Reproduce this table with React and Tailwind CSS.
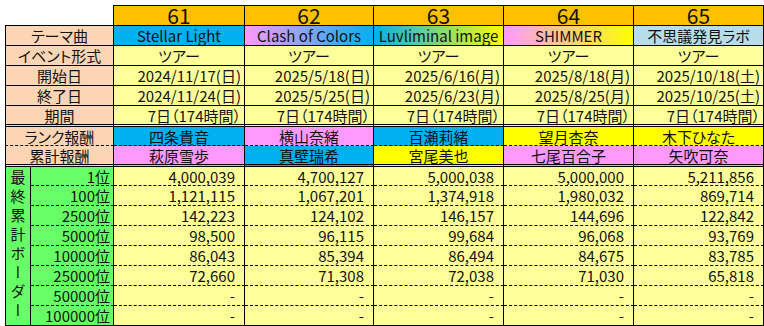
import React from 'react';

const BLUE = 'bg-[#00B0F0]';
const PINK = 'bg-[#FF99FF]';
const YELLOW = 'bg-[#FFFF00]';

const events = [
  {
    no: 61,
    theme: 'Stellar Light',
    themeBg: 'bg-[#00B0F0]',
    start: '2024/11/17(日)',
    end: '2024/11/24(日)',
    rank: { name: '四条貴音', bg: BLUE },
    total: { name: '萩原雪歩', bg: PINK },
    borders: ['4,000,039', '1,121,115', '142,223', '98,500', '86,043', '72,660', '-', '-'],
  },
  {
    no: 62,
    theme: 'Clash of Colors',
    themeBg: 'bg-[linear-gradient(to_right,#FF99FF,#00B0F0)]',
    start: '2025/5/18(日)',
    end: '2025/5/25(日)',
    rank: { name: '横山奈緒', bg: PINK },
    total: { name: '真壁瑞希', bg: BLUE },
    borders: ['4,700,127', '1,067,201', '124,102', '96,115', '85,394', '71,308', '-', '-'],
  },
  {
    no: 63,
    theme: 'Luvliminal image',
    themeBg: 'bg-[linear-gradient(to_right,#00B0F0,#FFFF00)]',
    start: '2025/6/16(月)',
    end: '2025/6/23(月)',
    rank: { name: '百瀬莉緒', bg: BLUE },
    total: { name: '宮尾美也', bg: YELLOW },
    borders: ['5,000,038', '1,374,918', '146,157', '99,684', '86,494', '72,038', '-', '-'],
  },
  {
    no: 64,
    theme: 'SHIMMER',
    themeBg: 'bg-[linear-gradient(to_right,#FF99FF,#FFFF00)]',
    start: '2025/8/18(月)',
    end: '2025/8/25(月)',
    rank: { name: '望月杏奈', bg: YELLOW },
    total: { name: '七尾百合子', bg: PINK },
    borders: ['5,000,000', '1,980,032', '144,696', '96,068', '84,675', '71,030', '-', '-'],
  },
  {
    no: 65,
    theme: '不思議発見ラボ',
    themeBg: 'bg-[#B7DEE8]',
    start: '2025/10/18(土)',
    end: '2025/10/25(土)',
    rank: { name: '木下ひなた', bg: YELLOW },
    total: { name: '矢吹可奈', bg: PINK },
    borders: ['5,211,856', '869,714', '122,842', '93,769', '83,785', '65,818', '-', '-'],
  },
];

const ranks = ['1位', '100位', '2500位', '5000位', '10000位', '25000位', '50000位', '100000位'];

// one cell of the sheet; every cell draws its own right + bottom line
function Cell({ className = '', children }) {
  return (
    <div className={`flex items-center border-r border-b border-black overflow-hidden whitespace-nowrap ${className}`}>
      {children}
    </div>
  );
}

const LABEL = 'col-span-2 border-l bg-[#FCD5B4] justify-center';
const DATA = 'bg-[#FFFF99]';
const DOUBLE = 'border-b-[3px] [border-bottom-style:double]';
const DASHED = '[border-bottom-style:dashed]';

export default function App() {
  return (
    <div className="w-[764px] h-[326px] bg-white pt-[5px] pl-[5px] text-[15px] leading-none text-[#111] font-['Noto_Sans_CJK_JP',sans-serif] [font-feature-settings:'palt']">
      <div className="grid grid-cols-[26px_83px_131px_129px_130px_130px_130px] grid-rows-[21px_20px_20px_20px_20px_21px_19px_21px_19px_20px_20px_20px_20px_20px_20px_20px]">
        {/* header row */}
        <Cell className="col-span-2 bg-white" />
        {events.map((e) => (
          <Cell key={`h${e.no}`} className="border-t bg-[#FFC000] justify-center text-[21px] leading-[19px]">
            {e.no}
          </Cell>
        ))}

        <Cell className={LABEL}>テーマ曲</Cell>
        {events.map((e) => (
          <Cell key={`t${e.no}`} className={`${e.themeBg} justify-center`}>
            {e.theme}
          </Cell>
        ))}

        <Cell className={LABEL}>イベント形式</Cell>
        {events.map((e) => (
          <Cell key={`f${e.no}`} className={`${DATA} justify-center`}>
            ツアー
          </Cell>
        ))}

        <Cell className={LABEL}>開始日</Cell>
        {events.map((e) => (
          <Cell key={`s${e.no}`} className={`${DATA} justify-end pr-[3px]`}>
            {e.start}
          </Cell>
        ))}

        <Cell className={LABEL}>終了日</Cell>
        {events.map((e) => (
          <Cell key={`e${e.no}`} className={`${DATA} justify-end pr-[3px]`}>
            {e.end}
          </Cell>
        ))}

        <Cell className={`${LABEL} ${DOUBLE}`}>期間</Cell>
        {events.map((e) => (
          <Cell key={`p${e.no}`} className={`${DATA} ${DOUBLE} justify-end pr-[3px]`}>
            7日（174時間）
          </Cell>
        ))}

        <Cell className={`${LABEL} ${DASHED}`}>ランク報酬</Cell>
        {events.map((e) => (
          <Cell key={`r${e.no}`} className={`${e.rank.bg} ${DASHED} justify-center`}>
            {e.rank.name}
          </Cell>
        ))}

        <Cell className={`${LABEL} ${DOUBLE}`}>累計報酬</Cell>
        {events.map((e) => (
          <Cell key={`c${e.no}`} className={`${e.total.bg} ${DOUBLE} justify-center`}>
            {e.total.name}
          </Cell>
        ))}

        {/* final cumulative borders */}
        <Cell className="row-span-8 border-l bg-[#66FF66] justify-center">
          <span className="[writing-mode:vertical-rl] [text-orientation:upright] tracking-[4px] text-[15px]">
            最終累計ボーダー
          </span>
        </Cell>
        {ranks.map((rk, i) => {
          const line = i < ranks.length - 1 ? DASHED : '';
          return (
            <React.Fragment key={rk}>
              <Cell className={`bg-[#66FF66] justify-end pr-[3px] ${line}`}>{rk}</Cell>
              {events.map((e) => (
                <Cell key={`${rk}${e.no}`} className={`${DATA} justify-end pr-[9px] ${line}`}>
                  {e.borders[i]}
                </Cell>
              ))}
            </React.Fragment>
          );
        })}
      </div>
    </div>
  );
}
